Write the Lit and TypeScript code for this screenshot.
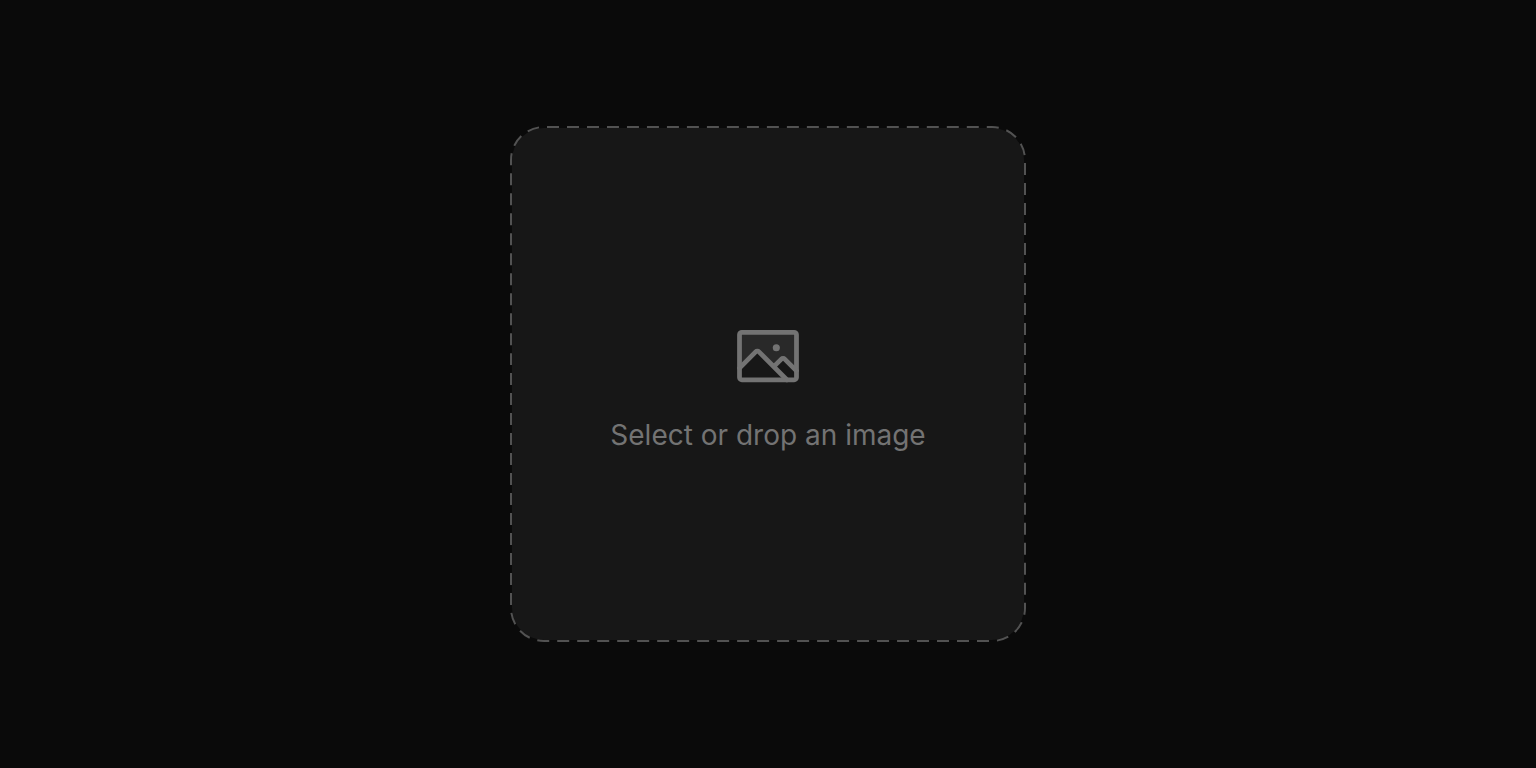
import { LitElement, html, css } from "lit";
import { customElement } from "lit/decorators.js";

@customElement("app-root")
export class AppRoot extends LitElement {
  static styles = css`
    :host {
      display: flex;
      align-items: center;
      justify-content: center;
      min-height: 100vh;
      background: #0a0a0a;
      font-family: Inter, "Liberation Sans", sans-serif;
    }
    .dropzone {
      position: relative;
      box-sizing: border-box;
      display: flex;
      flex-direction: column;
      align-items: center;
      justify-content: center;
      gap: 26px;
      width: min(516px, 100%);
      aspect-ratio: 1;
      padding: 0;
      border: 2px solid transparent;
      border-radius: 34px;
      background: #171717 padding-box;
      color: #737373;
      font: inherit;
      font-size: 28px;
      line-height: 30px;
      cursor: pointer;
    }
    .outline {
      position: absolute;
      inset: -2px;
      width: calc(100% + 4px);
      height: calc(100% + 4px);
      pointer-events: none;
    }
    .dashes {
      fill: none;
      stroke: #525252;
      stroke-width: 2;
      stroke-dasharray: 12 8;
      stroke-dashoffset: 17;
    }
    .icon {
      width: 76px;
      height: 76px;
    }
    .line {
      fill: none;
      stroke: currentColor;
      stroke-width: 16;
      stroke-linecap: round;
      stroke-linejoin: round;
    }
    .tone {
      fill: currentColor;
      opacity: 0.2;
    }
    .dot {
      fill: currentColor;
    }
  `;

  render() {
    return html`
      <button class="dropzone" type="button">
        <svg class="outline" viewBox="0 0 516 516" aria-hidden="true">
          <rect class="dashes" x="1" y="1" width="514" height="514" rx="33" pathLength="2000" />
        </svg>
        <svg class="icon" viewBox="0 0 256 256" aria-hidden="true">
          <path
            class="tone"
            d="M224 56v122.06l-39.72-39.72a8 8 0 0 0-11.31 0L147.31 164l-49.65-49.66a8 8 0 0 0-11.32 0L32 168.69V56a8 8 0 0 1 8-8h176a8 8 0 0 1 8 8Z"
          />
          <rect class="line" x="32" y="48" width="192" height="160" rx="8" />
          <path
            class="line"
            d="M147.31 164 173 138.34a8 8 0 0 1 11.31 0L224 178.06M32 168.69l54.34-54.35a8 8 0 0 1 11.32 0L191.31 208"
          />
          <circle class="dot" cx="156" cy="100" r="12" />
        </svg>
        <span>Select or drop an image</span>
      </button>
    `;
  }
}
